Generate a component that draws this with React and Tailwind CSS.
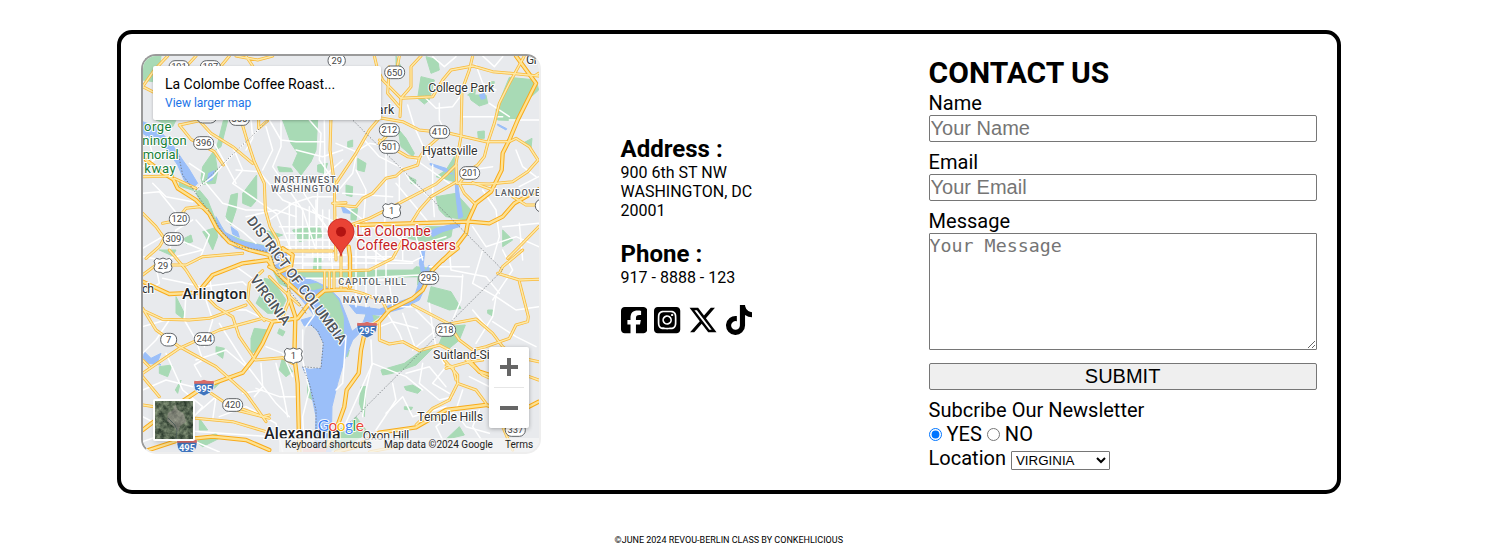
import React from "react";
import { FaSquareFacebook, FaSquareInstagram, FaXTwitter, FaTiktok } from "react-icons/fa6";

// Map geometry is drawn in tiles; each tile is shifted by its own origin.
const TILES = [
  {
    at: "translate(0 0)",
    parks: [
      "M20 20L75 18 70 60 50 95 20 90Z", "M440 210L545 210 540 300 525 335 495 375 470 345 485 310 465 280Z",
      "M200 350L235 300 245 365 238 400 200 403 195 385Z", "M240 300L262 212 275 212 255 290Z",
      "M285 435L305 430 300 480 285 525 270 500Z", "M320 430L362 375 362 450 345 470 320 460Z",
      "M190 420L215 450 235 500 270 550 330 575 400 590 400 603 330 595 270 570 220 500 180 430Z",
      "M200 545L240 532 245 560 230 600 215 570Z", "M145 565L165 555 170 575 150 582Z", "M425 350L465 355 470 365 430 365Z",
      "M470 540L550 528 560 560 490 575Z", "M545 345L575 340 565 370 545 365Z",
      "M130 395L165 400 185 425 130 408Z", "M85 155L130 190 110 230 60 210Z", "M385 540L440 555 400 570Z",
      "M535 622L555 622 555 662 532 660Z", "M480 662L830 660 840 650 885 655 890 680 480 684Z",
    ],
    water: [
      "M20 215L60 230 110 285 140 330 158 355 185 400 172 412 145 392 125 345 90 295 20 250Z",
      "M240 500L265 545 310 572 400 592 450 600 455 640 405 625 390 608 300 595 255 560Z",
      "M285 530L305 545 310 562 290 552Z", "M218 370L235 362 228 390 214 395Z",
      "M430 640L470 670 540 695 575 712 610 745 632 800 650 850 600 880 560 850 530 790 490 740 450 700 410 650Z",
    ],
    isles: ["M558 728L582 720 608 752 622 800 622 862 598 822 572 780 545 752Z", "M505 705L545 700 560 712 530 720Z"],
    roads: [
      "M95 18L55 60 20 110", "M280 18L255 48", "M330 18L350 48M300 18L365 30 410 18", "M180 18L150 50",
      "M130 225L165 268 235 305 262 345", "M130 225L190 212 225 250 290 290 350 340", "M20 110L60 130",
      "M315 210L330 260 355 335 385 400 388 480 402 530 425 570 440 630", "M395 212L368 235 368 205",
      "M585 200L582 300 595 400 597 520 600 630", "M20 380L110 378",
      "M20 490L60 530 85 565 70 590 30 625", "M130 500L150 475 190 470 215 480", "M130 510L80 520",
      "M440 603L590 603", "M590 460L630 458", "M115 385L180 415",
      "M615 615L615 715M460 662L630 662 700 660 770 625 800 570",
      "M566 662L566 722M580 662L580 715M594 662L594 715",
    ],
    major: ["M30 330L80 368 112 388 125 415 180 450 220 492 242 535 280 577 340 600 400 615 410 650", "M638 590L642 620 642 710"],
    streets: [
      "M175 420L230 380 260 345 320 285 395 212", "M345 205L350 265 330 300", "M400 210L435 270 480 275 565 275",
      "M290 290L320 360 290 400 420 490 470 610", "M435 210L435 290 410 350 500 480 540 600", "M20 430L70 425 130 500",
      "M50 400L90 440 170 455", "M210 400L260 460 330 480 385 480", "M520 210L555 250 550 330 600 400",
      "M565 210L567 370 545 425 540 600", "M430 380L480 390 510 440 590 560", "M300 360L370 365 440 450 610 520",
      "M460 460L460 600M480 450L480 600M500 480L500 600M520 470L520 600M560 480L560 630M580 480L580 630",
      "M430 530L620 530M450 550L620 550M430 570L620 570M450 590L620 590", "M400 510L470 460 530 440 590 440",
      "M20 595L80 560 130 570 200 600", "M100 600L120 540 170 510", "M180 510L220 555 190 630", "M35 260L55 330 20 350",
      "M160 340L205 370 200 390", "M270 510L320 545 360 580", "M390 230L410 300 380 360M330 500L420 480 480 500",
      "M200 215L300 400M430 430L540 400 620 330M480 300L560 320 620 300",
      "M530 480L620 590M430 620L600 622M460 640L830 640M540 450L540 530",
    ],
  },
  {
    at: "translate(600 0)",
    parks: [
      "M520 82L600 90 608 120 575 150 550 212 485 210 480 180Z", "M255 80L295 90 280 150 265 162 245 145Z", "M270 20L305 30 310 60 285 70Z",
      "M400 135L450 135 455 160 430 168 405 150Z", "M420 115L415 140 395 135Z", "M185 235L210 265 235 310 230 320 195 290 190 260Z",
      "M425 245L445 243 445 265 427 265Z", "M355 320L355 395 300 380 330 360Z", "M300 440L360 430 405 480 390 510 330 500 310 480Z",
      "M270 530L350 530 345 560 300 580 215 565Z", "M65 325L90 340 85 365 65 360Z", "M30 405L50 410 48 440 30 435Z",
      "M45 480L65 475 60 510 45 510Z", "M500 540L530 570 500 590Z", "M35 275L50 270 50 290 35 292Z", "M560 280L588 265 585 295Z",
      "M180 18L195 50 180 80Z", "M220 380L240 390 238 403 225 400Z", "M460 95L475 95 470 120Z",
    ],
    water: ["M358 330L365 400 372 450 380 500 368 505 360 440 355 350Z", "M300 535L340 525 375 510 370 530 320 545 290 560 280 545Z",
      "M15 465L38 478 43 490 22 488Z", "M485 222L512 236 510 240 485 226Z", "M430 135L445 130 448 145 436 148Z", "M282 340L330 355 350 372 340 370 282 344Z",
      "M258 590L268 590 262 640 272 690 262 690 250 640Z"],
    roads: [
      "M410 18L400 60 378 120 375 260 360 340 362 400", "M130 203L200 215 250 240 340 250 450 275 520 275 540 265 580 290 606 330 575 365 530 395 460 402 365 400",
      "M130 205L100 240 60 310 0 400", "M115 18L125 60 140 90 195 145 290 140 320 90 345 60 410 48 470 65 608 78", "M160 50L155 130 190 170",
      "M255 18L225 50 225 110 195 145 192 200", "M190 18L180 70", "M130 280L155 255M130 270L215 320 250 325 245 345 200 360 180 378 150 385 110 430 80 445 60 470 0 465",
      "M565 18L520 100 490 160 475 220 458 270 445 320 425 345 400 360 370 400", "M305 265L265 300 250 325", "M0 540L100 505 160 475 300 402 335 370 360 345",
      "M362 395L285 440 250 480 225 520", "M370 400L385 430 415 460", "M410 398L470 420", "M608 530L560 580 515 625", "M530 440L570 465 608 465", "M600 75L608 70",
    ],
    major: ["M540 18L600 100 575 150 545 210 520 270 500 310 497 360 465 425 420 460 397 510 390 550 360 590 320 632", "M60 525L220 520 400 515 460 520 500 500 535 460 608 418"],
    streets: [
      "M0 280L60 305 100 280 130 285", "M85 270L130 320 200 355 220 390 290 450", "M150 290L150 440 145 540", "M20 430L170 440", "M0 450L130 545", "M60 360L90 420 80 545",
      "M190 370L190 470", "M290 345L290 430 295 500", "M215 165L235 230 280 330", "M310 160L310 210 325 240", "M290 20L325 50 360 20", "M420 45L440 100 480 120",
      "M375 200L440 200 500 200", "M520 210L608 210", "M440 420L480 480 490 560 470 630", "M400 360L470 350", "M440 18L475 50 500 20", "M150 540L230 590 330 560",
      "M550 410L608 380", "M180 400L280 520", "M240 330L340 400", "M460 160L520 200", "M395 110L350 170 300 175 265 140", "M500 530L608 520", "M550 520L560 630",
      "M0 500L60 560 150 630", "M200 560L200 630M240 560L260 630", "M410 530L450 590 540 560 608 590", "M540 300L560 350 600 380", "M50 90L90 140 130 145", "M0 430L50 370 60 320",
    ],
  },
  {
    at: "translate(0 600)",
    parks: [
      "M385 85L410 90 450 150 430 190 395 190 360 160 375 130Z", "M355 235L395 240 370 300 345 310 345 265Z", "M440 320L470 365 450 380 430 360Z",
      "M120 140L145 190 140 205 120 190Z", "M240 290L265 295 260 325 240 310Z", "M70 350L108 345 95 380 70 370Z", "M135 390L125 430 118 420Z",
      "M190 505L215 540 190 540Z", "M70 0L120 0 110 18Z", "M515 395L540 410 530 450 515 440Z",
      "M230 395L250 400 235 415Z", "M430 236L447 245 440 258 425 250Z", "M540 560L630 540 660 500 690 540 640 590 560 606Z",
      "M180 575L240 550 250 565 200 590Z", "M400 40L440 60 470 120 430 100Z",
    ],
    water: [
      "M530 200L620 190 640 250 680 220 700 170 712 210 682 238 650 270 625 330 605 400 588 470 585 606 535 606 540 500 520 400 500 352 520 358 555 355 562 280 545 245 525 225 505 228 495 210Z",
      "M25 305L45 325 75 310 65 335 75 345 35 340 22 325Z",
    ],
    land: ["M512 228L535 236 556 270 552 350 505 348 500 290Z"],
    roads: [
      "M20 75L60 45 150 45 200 20 320 10", "M100 0L150 60 185 115 240 170 290 200 310 260 358 330 440 323 470 340", "M20 180L80 208 160 210 220 205 330 165",
      "M20 175L60 240 130 290 240 350 330 430 390 515", "M20 370L130 295 250 240 380 205 410 215", "M380 62L340 100 335 150 385 212", "M225 430L300 480 400 505",
      "M180 505L290 515 390 545", "M20 380L70 440", "M20 465L55 470", "M455 60L460 150 440 200",
      "M300 470L380 500 400 495", "M20 330L40 350", "M400 80L440 120 490 165",
    ],
    major: ["M20 540L100 480 205 410 320 368 350 330 380 280 410 215 485 205 520 160 565 122 630 118", "M20 95L100 132 185 128 230 75 320 40 395 30 425 70 490 130 520 155",
      "M455 130L478 200 475 320 485 400 490 606", "M20 606L130 570 230 560 330 570 400 600", "M440 -5L470 15 465 50 430 66 400 50"],
    streets: [
      "M80 85L200 110 320 95 330 105", "M150 130L145 210 180 270 200 330 175 345 195 380", "M210 150L230 210 205 290", "M100 210L60 270 20 310", "M250 220L320 330 420 460 460 500",
      "M375 340L380 410 355 440", "M420 340L440 420 455 500", "M360 415L430 440 480 440", "M60 50L70 100 20 130", "M280 180L330 180 410 220", "M160 510L240 440 230 510",
      "M20 230L90 210", "M90 310L140 420 200 470 170 505", "M20 420L90 390 170 410", "M500 240L500 330 520 420 500 500 505 606", "M390 290L440 310 470 380", "M250 500L330 470 420 520 440 606",
      "M20 500L120 550 250 606", "M180 330L270 300 330 350", "M500 0L500 60M530 0L530 20M545 0L545 60M585 0L590 60", "M500 45L630 45M510 85L630 85M510 15L630 15",
      "M525 170L535 195 510 230", "M300 50L370 100 400 160", "M220 80L230 140 300 120", "M320 430L380 420M20 20L80 30 200 0",
      "M20 575L120 540 400 560",
    ],
  },
  {
    at: "translate(600 600)",
    parks: [
      "M285 110L345 125 375 175 340 180 275 155Z", "M330 230L388 225 370 270 340 295 310 280Z", "M135 360L205 340 260 300 300 285 240 345 170 370 140 375Z",
      "M370 530L385 555 330 568Z", "M75 410L90 410 85 500 70 460Z", "M455 180L470 180 470 198 455 190Z", "M205 410L230 405 255 420 245 430 210 420Z", "M245 65L270 70 265 110 245 105Z",
      "M0 540L70 520 95 550 60 570 0 600Z", "M20 290L40 300 35 320 18 315Z", "M90 190L130 200 110 215 85 215Z", "M205 470L230 472 225 480 205 478Z",
    ],
    water: ["M40 165L130 178 190 155 235 140 255 80 280 45 275 95 250 150 200 175 130 195 60 190Z"],
    roads: [
      "M0 118L50 122 80 130 140 155 155 185", "M230 165L340 222 420 207 470 250 500 290 540 320 608 335", "M130 215L130 270 160 282 200 275 250 302 310 285 380 320 440 375 540 420",
      "M340 225L370 270 410 300 450 290 520 265 540 225 575 215 577 200 550 95", "M485 70L550 90 608 88", "M490 70L500 50 560 0", "M325 330L365 375 365 400 420 420 450 460", "M240 525L290 475 340 450 365 400",
      "M330 355L400 335 440 330M580 380L608 390", "M330 345L350 350 360 390", "M500 530L530 600", "M100 606L180 590",
    ],
    major: ["M365 -5L320 30 290 60 260 120 230 145 160 180 130 215 88 240 75 300 68 370 32 420 25 470 0 540 -40 606", "M0 606L60 590 130 548 240 532 330 480 450 465 540 490 608 455", "M390 320L430 365 540 400"],
    streets: [
      "M80 250L170 215 245 235", "M105 270L108 340 90 420 80 500", "M280 160L290 240 300 290", "M155 190L190 250 200 275", "M210 370L280 350 330 410", "M380 75L375 150 350 210", "M60 85L250 75 380 80",
      "M60 20L230 35 260 20", "M440 0L410 100 480 140 470 200 420 280", "M470 150L530 60 500 0", "M470 215L540 260 600 290", "M260 340L250 400 310 450 350 440", "M20 540L110 340 210 380 260 420",
      "M150 490L200 440 230 500 330 470", "M120 540L180 450 170 400", "M360 490L390 530 460 550", "M300 300L330 350 290 400 340 430", "M400 380L480 420 500 300", "M160 100L170 170 230 170", "M280 50L400 50",
      "M50 20L180 20M50 40L160 40M50 90L150 90M60 0L60 170M90 0L90 170M120 0L120 140M150 0L150 90", "M200 190L240 300M240 180L300 240 230 300", "M410 180L460 240M480 140L540 180 608 170", "M30 260L20 400 0 420",
      "M380 420L360 480 300 530 330 590", "M430 480L410 530 460 606", "M340 0L345 60 450 80 490 130",
    ],
  },
];

const LABELS = [
  [877, 126, "College Park", 198], [858, 314, "Hyattsville", 167], [722, 192, "ark", 53], [1170, 42, "Gr", 36],
  [18, 729, "ch", 36], [891, 928, "Suitland-Si", 170], [844, 1113, "Temple Hills", 197], [680, 1171, "Oxon Hill", 140],
];
const DISTRICTS = [
  [415, 399, "NORTHWEST", 184], [405, 426, "WASHINGTON", 204], [607, 705, "CAPITOL HILL", 203], [620, 760, "NAVY YARD", 168], [1077, 439, "LANDOVER", 155],
];
const SHIELDS = [
  [129, 51, "191"], [223, 51, "187"], [602, 32, "29"], [776, 67, "650"], [203, 279, "396"], [760, 240, "212"], [760, 291, "501"], [911, 246, "410"],
  [1001, 369, "201"], [130, 507, "120"], [112, 567, "309"], [98, 869, "7"], [205, 867, "244"], [878, 684, "295"], [929, 840, "218"], [290, 1065, "420"],
  [1138, 1140, "337"], [212, 200, "190"], [310, 207, "355"], [1228, 467, ""],
];

function Strokes({ kind, color, width }) {
  return (
    <g fill="none" stroke={color} strokeWidth={width} strokeLinejoin="round" strokeLinecap="round">
      {TILES.map((t) => t[kind].map((d, i) => <path key={t.at + i} d={d} transform={t.at} />))}
    </g>
  );
}

function Areas({ kind, color }) {
  return (
    <g fill={color} stroke={color} strokeWidth="3" strokeLinejoin="round">
      {TILES.map((t) => (t[kind] || []).map((d, i) => <path key={t.at + i} d={d} transform={t.at} />))}
    </g>
  );
}

function UsShield({ x, y, n }) {
  return (
    <g transform={`translate(${x} ${y})`}>
      <path d="M-20 -22Q-10 -16 0 -23Q10 -16 20 -22L27 -14Q21 -4 27 6Q27 17 16 19Q5 19 0 24Q-5 19 -16 19Q-27 17 -27 6Q-21 -4 -27 -14Z" fill="#fff" stroke="#606468" strokeWidth="3" />
      <text y="9" textAnchor="middle" fontSize="28" fill="#444">{n}</text>
    </g>
  );
}

function Interstate({ x, y, n }) {
  return (
    <g transform={`translate(${x} ${y})`}>
      <path d="M-29 -19Q-13 -16 0 -22Q13 -16 29 -19Q34 8 16 18L0 26L-16 18Q-34 8 -29 -19Z" fill="#3f74bd" stroke="#fff" strokeWidth="2" />
      <path d="M-29 -20Q-13 -17 0 -23Q13 -17 29 -20L30 -11H-30Z" fill="#d96b66" />
      <text y="13" textAnchor="middle" fontSize="28" fontWeight="700" fill="#fff">{n}</text>
    </g>
  );
}

function MapCanvas() {
  return (
    <svg className="block h-[396px] w-[396px]" viewBox="21 18 1188 1188" fontFamily="Roboto, sans-serif">
      <rect x="0" y="0" width="1300" height="1300" fill="#e8eaed" />
      <Areas kind="parks" color="#a8dab5" />
      <Areas kind="water" color="#9bbff9" />
      <Areas kind="land" color="#dfe1e5" />
      <Areas kind="isles" color="#a8dab5" />
      <Strokes kind="streets" color="#fff" width="4.5" />
      <Strokes kind="roads" color="#f9b93a" width="9" />
      <Strokes kind="major" color="#f9ab1a" width="13" />
      <Strokes kind="roads" color="#fde9a8" width="4.5" />
      <Strokes kind="major" color="#fde293" width="7" />
      <g fill="none" stroke="#70757a" strokeWidth="2.5" strokeDasharray="4 5">
        <path d="M395 212L180 420M645 205L1100 660L630 1130M125 300L140 375 180 430 230 500 260 550 310 590 400 605 430 680 490 760 510 790" />
        <path d="M525 825L545 842 562 880 555 955 500 950 520 1000 540 1080 540 1200" />
      </g>
      <path d="M500 1195H570V1206H500Z" fill="#f1b0ad" />

      <g fill="#fff" stroke="#606468" strokeWidth="3">
        {SHIELDS.map(([x, y, n]) => {
          const w = n.length === 2 ? 52 : n.length === 1 ? 48 : 60;
          return <rect key={n + x} x={x - w / 2} y={y - 19} width={w} height="38" rx="18" />;
        })}
      </g>
      <g fill="#444" fontSize="28" textAnchor="middle">
        {SHIELDS.map(([x, y, n]) => <text key={n + x} x={x} y={y + 10}>{n}</text>)}
      </g>
      <UsShield x={767} y={483} n="1" />
      <UsShield x={472} y={917} n="1" />
      <UsShield x={81} y={647} n="29" />
      <Interstate x={204} y={1012} n="395" />
      <Interstate x={693} y={838} n="295" />
      <Interstate x={153} y={1189} n="495" />

      <g stroke="#fff" strokeWidth="6" strokeLinejoin="round" style={{ paintOrder: "stroke" }}>
        {LABELS.map(([x, y, t, w]) => <text key={t} x={x} y={y} fontSize="37" fill="#333" textLength={w}>{t}</text>)}
        {DISTRICTS.map(([x, y, t, w]) => (
          <text key={t} x={x} y={y} fontSize="27.5" fontWeight="500" fill="#5b6066" textLength={w}>{t}</text>
        ))}
        <g fontSize="39" fill="#188038">
          <text x="24" y="243" textLength="82">orge</text>
          <text x="19" y="285" textLength="133">nington</text>
          <text x="20" y="327" textLength="108">morial</text>
          <text x="25" y="369" textLength="94">kway</text>
        </g>
        <g fontWeight="500" fill="#202124">
          <text x="139" y="748" fontSize="46" textLength="194">Arlington</text>
          <text x="385" y="1168" fontSize="47" textLength="228">Alexandria</text>
        </g>
        <g fontSize="42" fontWeight="500" fill="#50555a">
          <text transform="translate(331 513) rotate(53)" textLength="466">DISTRICT OF COLUMBIA</text>
          <text transform="translate(340 688) rotate(54)" textLength="174">VIRGINIA</text>
        </g>
        <g fontSize="42" fill="#c5221f">
          <text x="661" y="559" textLength="223">La Colombe</text>
          <text x="661" y="600" textLength="299">Coffee Roasters</text>
        </g>
      </g>
      <path d="M615 619C612 590 576 575 576 545A39 39 0 0 1 654 545C654 575 618 590 615 619Z" fill="#ea4335" stroke="#c5221f" strokeWidth="2.5" />
      <circle cx="615" cy="545" r="15" fill="#b31412" />
      <text x="545" y="1143" fontFamily="Lato, sans-serif" fontSize="47" fontWeight="400" stroke="#fff" strokeWidth="5" textLength="139" style={{ paintOrder: "stroke" }}>
        <tspan fill="#4285f4">G</tspan><tspan fill="#ea4335">o</tspan><tspan fill="#fbbc04">o</tspan><tspan fill="#4285f4">g</tspan><tspan fill="#34a853">l</tspan><tspan fill="#ea4335">e</tspan>
      </text>
    </svg>
  );
}

function SatelliteThumb() {
  return (
    <div className="absolute bottom-[11px] left-[10px] h-[42px] w-[42px] rounded-xs border-2 border-white shadow-md">
      <svg viewBox="0 0 38 38" className="block h-full w-full">
        <defs>
          <filter id="terrain" x="0" y="0" width="1" height="1" colorInterpolationFilters="sRGB">
            <feTurbulence type="fractalNoise" baseFrequency="0.18" numOctaves="4" seed="7" />
            <feColorMatrix values="0.7 0 0 0 0 0.7 0 0 0 0.06 0.6 0 0 0 0.03 0 0 0 0 1" />
          </filter>
        </defs>
        <rect width="38" height="38" filter="url(#terrain)" />
        <path d="M13 12L18 9 20 3 23 9 29 13 31 21 25 25 23 31 18 25 12 20Z" fill="#a39c98" opacity=".5" />
        <path d="M13 17L20 24 22 29 21 38" fill="none" stroke="#4f5e58" strokeWidth="1" />
      </svg>
    </div>
  );
}

function LocationMap() {
  return (
    <div className="relative h-[400px] w-[400px] shrink-0 overflow-hidden rounded-[15px] border-2 border-t-[#9a9a9a] border-r-[#eeeeee] border-b-[#eeeeee] border-l-[#9a9a9a]">
      <MapCanvas />
      <div className="absolute top-[10px] left-[10px] h-[54px] w-[228px] rounded-xs bg-white px-[12.4px] pt-[9px] shadow-[0_1px_3px_rgba(0,0,0,0.25)]">
        <p className="text-[14px] leading-[19px] whitespace-nowrap text-black">La Colombe Coffee Roast...</p>
        <a className="block text-[12px] leading-[18px] text-[#1a73e8]">View larger map</a>
      </div>
      <div className="absolute right-[10px] bottom-[24px] flex h-[81px] w-[40px] flex-col items-center rounded-xs bg-white shadow-[0_1px_4px_rgba(0,0,0,0.3)]">
        <svg viewBox="0 0 40 40" className="h-10 w-10"><path d="M11 18H18V11H22V18H29V22H22V29H18V22H11Z" fill="#666" /></svg>
        <div className="h-px w-[30px] shrink-0 bg-[#e6e6e6]" />
        <svg viewBox="0 0 40 40" className="h-10 w-10"><path d="M11 18H29V22H11Z" fill="#666" /></svg>
      </div>
      <SatelliteThumb />
      <div className="absolute right-0 bottom-0 flex h-[14px] w-[260px] bg-[#f5f5f5]/75 text-[10px] leading-[14px] whitespace-nowrap text-[#222]">
        <span className="w-[99px] pl-[6.4px]">Keyboard shortcuts</span>
        <span className="w-[121px] pl-[6.4px]">Map data ©2024 Google</span>
        <span className="pl-[6.4px]">Terms</span>
      </div>
    </div>
  );
}

function Details() {
  return (
    <section className="ml-20 w-[308px] shrink-0 pt-[81px] text-[16px] leading-[19px]">
      <h2 className="h-7 text-[24px] leading-7 font-bold">Address :</h2>
      <p>900 6th ST NW<br />WASHINGTON, DC<br />20001</p>
      <h2 className="mt-5 h-7 text-[24px] leading-7 font-bold">Phone :</h2>
      <p>917 - 8888 - 123</p>
      <div className="mt-[18px] flex gap-[7.5px]">
        <FaSquareFacebook className="h-[30px] w-[26.25px]" />
        <FaSquareInstagram className="h-[30px] w-[26.25px]" />
        <FaXTwitter className="h-[30px] w-[30px]" />
        <FaTiktok className="h-[30px] w-[26.25px]" />
      </div>
    </section>
  );
}

function ContactForm() {
  const field = "block h-[27px] w-full rounded-[2px] border border-[#767676] bg-white px-px pb-px font-['Liberation_Sans',sans-serif] text-[20px] leading-6 placeholder:text-[#757575]";
  return (
    <form className="w-[388px] shrink-0 text-[20px] leading-6">
      <h1 className="h-[37px] text-[30px] leading-[37px] font-bold">CONTACT US</h1>
      <label className="block">Name</label>
      <input className={field} placeholder="Your Name" />
      <label className="mt-2 block">Email</label>
      <input className={field} placeholder="Your Email" />
      <label className="mt-2 block">Message</label>
      <textarea
        className="block h-[117px] w-full resize rounded-[1px] border border-[#767676] bg-white font-['DejaVu_Sans_Mono',monospace] text-[18.3px] leading-6 placeholder:text-[#757575]"
        placeholder="Your Message"
      />
      <button type="button" className="mt-[13px] block h-[27px] w-full rounded-[2px] border border-[#767676] bg-[#efefef] pb-px font-['Liberation_Sans',sans-serif] text-[20px] leading-6">SUBMIT</button>
      <p className="mt-2">Subcribe Our Newsletter</p>
      <div className="flex h-6 items-center">
        <input type="radio" name="newsletter" defaultChecked className="mt-px mr-[5px] h-[13px] w-[13px]" />
        <label>YES</label>
        <input type="radio" name="newsletter" className="mt-px mr-[5px] ml-[5px] h-[13px] w-[13px]" />
        <label>NO</label>
      </div>
      <div className="flex h-6 items-center">
        <label className="mr-[5px]">Location</label>
        <select className="mt-[5px] h-[19px] w-[99px] rounded-[1px] border border-[#767676] bg-white font-['Liberation_Sans',sans-serif] text-[13.333px] leading-4">
          <option>VIRGINIA</option>
        </select>
      </div>
    </form>
  );
}

export default function App() {
  return (
    <div className="flex h-[560px] flex-col bg-white font-[Roboto,sans-serif] text-black">
      <main className="mt-[30px] ml-[116.6px] flex h-[464px] w-[1224px] shrink-0 rounded-[15px] border-4 border-black p-5">
        <LocationMap />
        <Details />
        <ContactForm />
      </main>
      <footer className="mt-[40px] ml-[614.6px] text-[9px] leading-3">©JUNE 2024 REVOU-BERLIN CLASS BY CONKEHLICIOUS</footer>
    </div>
  );
}
